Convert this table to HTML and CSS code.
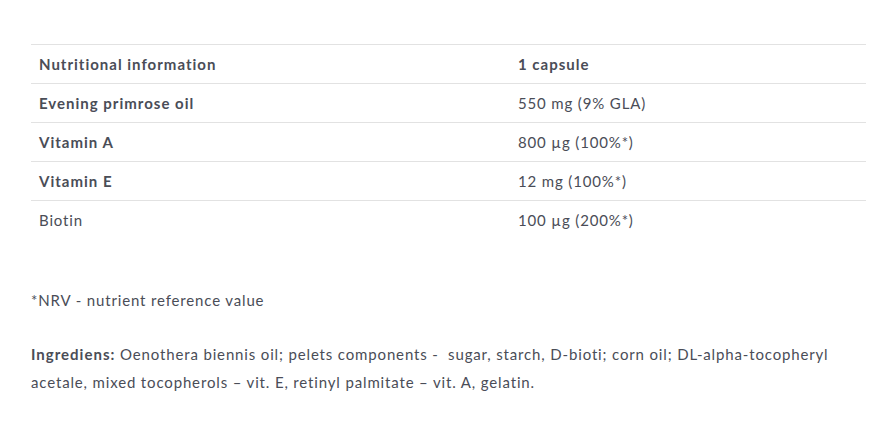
FILE: index.html
```html
<!DOCTYPE html>
<html>
<head>
<meta charset="utf-8">
<link rel="stylesheet" href="styles.css">
</head>
<body>
<div class="wrap">
  <table class="nutri">
    <tr><th>Nutritional information</th><th>1 capsule</th></tr>
    <tr><th>Evening primrose oil</th><td>550 mg (9% GLA)</td></tr>
    <tr><th>Vitamin A</th><td>800 µg (100%*)</td></tr>
    <tr><th>Vitamin E</th><td>12 mg (100%*)</td></tr>
    <tr class="last"><td>Biotin</td><td>100 µg (200%*)</td></tr>
  </table>
  <p class="note">*NRV - nutrient reference value</p>
  <p class="ingr"><strong>Ingrediens:</strong> Oenothera biennis oil; pelets components - &nbsp;sugar, starch, D-bioti; corn oil; DL-alpha-tocopheryl acetale, mixed tocopherols – vit. E, retinyl palmitate – vit. A, gelatin.</p>
</div>
</body>
</html>
```
FILE: styles.css
```css
html, body { margin: 0; padding: 0; background: #fff; }
body {
  font-family: Lato, "Open Sans", sans-serif;
  font-size: 15px;
  letter-spacing: 0.85px;
  color: #4a4d57;
}
.wrap { padding: 44px 30px 0 31px; }
.nutri {
  width: 835px;
  border-collapse: collapse;
}
.nutri th, .nutri td {
  text-align: left;
  height: 38px;
  padding: 0 8px;
  border-top: 1px solid #e2e2e2;
  vertical-align: middle;
  line-height: 20px;
}
.nutri th { font-weight: 700; letter-spacing: 1px; }
.nutri td { font-weight: 400; }
.nutri th:first-child, .nutri td:first-child { width: 463px; }
.note { margin: 51px 0 0; line-height: 20px; }
.ingr { margin: 30px 0 0; line-height: 28px; width: 820px; }
.ingr strong { font-weight: 700; letter-spacing: 1px; }
```
